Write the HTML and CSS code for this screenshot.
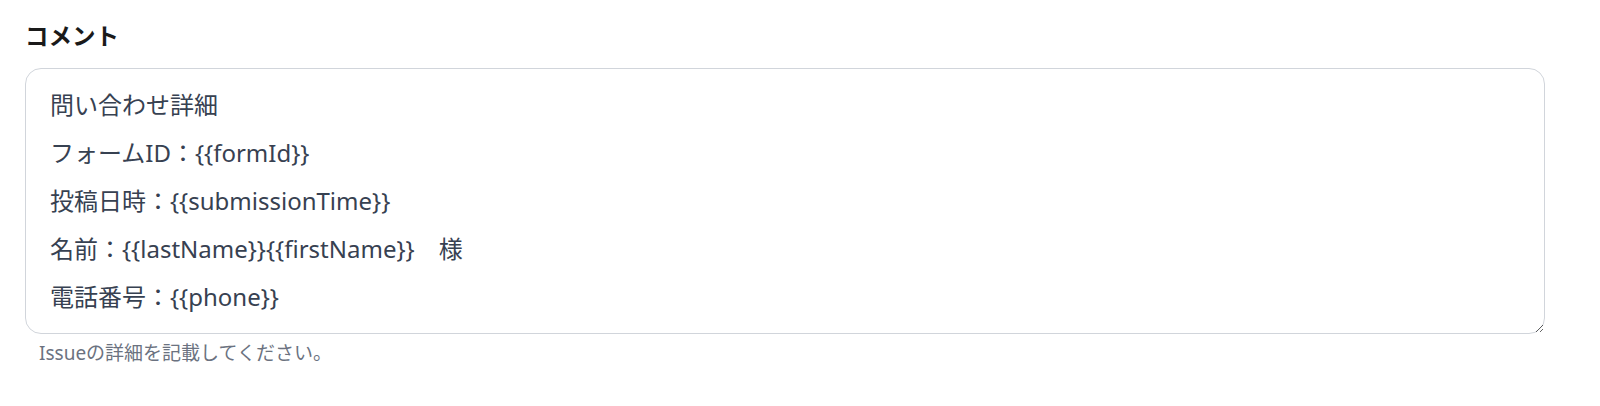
FILE: index.html
```html
<!DOCTYPE html>
<html lang="ja">
<head>
  <meta charset="utf-8" />
  <title>コメント</title>
  <link rel="stylesheet" href="styles.css">
</head>
<body>
  <div class="field">
    <label class="field-label" for="comment">コメント</label>
    <textarea id="comment" class="field-input">問い合わせ詳細
フォームID：{{formId}}
投稿日時：{{submissionTime}}
名前：{{lastName}}{{firstName}}　様
電話番号：{{phone}}</textarea>
    <p class="field-help">Issueの詳細を記載してください。</p>
  </div>
</body>
</html>
```

FILE: styles.css
```css
* {
  box-sizing: border-box;
}

body {
  margin: 0;
  padding: 18px 25px 0;
  background: #fff;
  font-family: "Noto Sans", "Noto Sans CJK JP", sans-serif;
}

.field {
  width: 1520px;
}

.field-label {
  display: block;
  font-size: 23.5px;
  line-height: 36px;
  font-weight: bold;
  color: #1a1a1a;
  margin-bottom: 14px;
}

.field-input {
  display: block;
  width: 100%;
  height: 266px;
  padding: 12px 24px;
  border: 1px solid #d1d5db;
  border-radius: 16px;
  font-family: inherit;
  font-size: 24px;
  line-height: 48px;
  color: #374151;
  resize: vertical;
}

.field-help {
  margin: 6px 0 0 14px;
  font-size: 19px;
  line-height: 27px;
  color: #6b7280;
}
```
